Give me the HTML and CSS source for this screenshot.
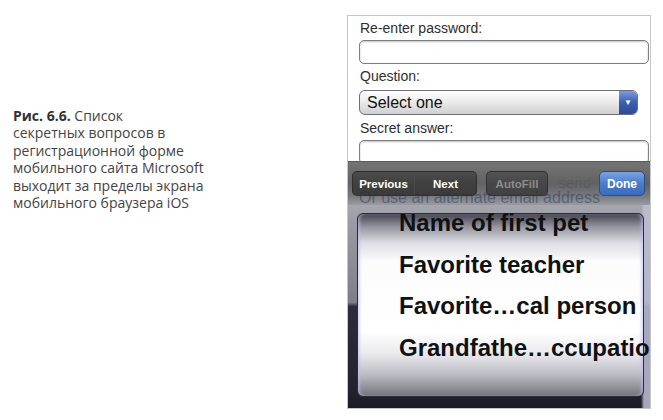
FILE: index.html
```html
<!DOCTYPE html>
<html lang="ru">
<head>
  <meta charset="UTF-8" />
  <title>Рис. 6.6</title>
  <link rel="stylesheet" href="styles.css">
</head>
<body>
  <div class="page">
    <p class="caption">
      <b>Рис. 6.6.</b> Список<br>
      секретных вопросов в<br>
      регистрационной форме<br>
      мобильного сайта Microsoft<br>
      выходит за пределы экрана<br>
      мобильного браузера iOS
    </p>

    <div class="phone">
      <div class="form">
        <label class="field-label">Re-enter password:</label>
        <div class="text-input"></div>
        <label class="field-label gap-q">Question:</label>
        <div class="select">
          <span>Select one</span>
          <span class="select-arrow">&#9660;</span>
        </div>
        <label class="field-label gap-s">Secret answer:</label>
        <div class="text-input"></div>
        <div class="hint">send</div>
        <a class="alt-link">Or use an alternate email address</a>
      </div>

      <!-- панель клавиатуры поверх формы -->
      <div class="toolbar">
        <div class="segmented">
          <span class="seg">Previous</span>
          <span class="seg">Next</span>
        </div>
        <span class="tbtn disabled">AutoFill</span>
        <span class="tbtn done">Done</span>
      </div>

      <div class="picker">
        <div class="wheel">
          <ul class="options">
            <li>Name of first pet</li>
            <li>Favorite teacher</li>
            <li>Favorite…cal person</li>
            <li>Grandfathe…ccupation</li>
          </ul>
        </div>
      </div>
    </div>
  </div>
</body>
</html>
```

FILE: styles.css
```css
body {
  margin: 0;
  background-color: #fff;
}
.page {
  display: flex;
  align-items: flex-start;
  padding-top: 15px;
}
.caption {
  flex: 0 0 347px;
  box-sizing: border-box;
  margin: 92px 0 0 0;
  padding-left: 13px;
  font-family: "Open Sans", sans-serif;
  font-size: 14px;
  line-height: 17.4px;
  color: #444;
}
.caption b {
  color: #333;
}

/* экран телефона */
.phone {
  position: relative;
  width: 302px;
  height: 392px;
  border: 1px solid #c6c6c6;
  overflow: hidden;
  background-color: #fff;
  font-family: "Liberation Sans", Arial, sans-serif;
}
.form {
  display: flex;
  flex-direction: column;
  padding: 3px 1px 0 11px;
}
.field-label {
  display: block;
  padding-left: 1px;
  font-size: 14px;
  line-height: 18px;
  color: #2e2e2e;
}
.gap-q {
  margin-top: 3px;
}
.gap-s {
  margin-top: 4px;
}
.text-input {
  height: 22px;
  margin-top: 3px;
  border: 1px solid #7e7e7e;
  border-radius: 5px;
  box-shadow: inset 0 1px 2px rgba(0,0,0,0.25);
  background-color: #fff;
}
.select {
  display: flex;
  align-items: center;
  justify-content: space-between;
  width: 277px;
  height: 23px;
  margin-top: 5px;
  border: 1px solid #6f6f78;
  border-radius: 6px;
  overflow: hidden;
  background: linear-gradient(#ffffff, #ececec 45%, #d0d0d0);
  font-size: 16px;
  color: #111;
}
.select span:first-child {
  padding-left: 7px;
}
.select-arrow {
  display: flex;
  align-items: center;
  justify-content: center;
  width: 18px;
  height: 100%;
  background: linear-gradient(#7d9be0, #3a5fb2 50%, #2b4a96);
  color: #fff;
  font-size: 8px;
}
.hint {
  align-self: flex-end;
  margin: 10px 58px 0 0;
  font-size: 15px;
  color: #8a8a8a;
}
.alt-link {
  margin-top: -2px;
  font-size: 16px;
  line-height: 18px;
  color: #2a3f7a;
}

/* тулбар Previous / Next / Done */
.toolbar {
  position: absolute;
  left: 0;
  right: 0;
  top: 145px;
  height: 44px;
  display: flex;
  align-items: flex-start;
  padding: 9px 5px 0 4px;
  box-sizing: border-box;
  background: linear-gradient(rgba(112,112,112,0.97), rgba(86,86,88,0.93) 50%, rgba(88,90,98,0.82) 78%, rgba(120,122,130,0.75));
  border-top: 1px solid #5a5a5a;
  font-size: 11.5px;
  font-weight: bold;
  color: #fff;
}
.segmented {
  display: flex;
  width: 125px;
  height: 25px;
  border: 1px solid rgba(40,40,40,0.7);
  border-radius: 5px;
  box-sizing: border-box;
  background: linear-gradient(rgba(70,70,70,0.85), rgba(40,40,40,0.75));
  overflow: hidden;
}
.seg {
  flex: 1;
  display: flex;
  align-items: center;
  justify-content: center;
}
.seg + .seg {
  border-left: 1px solid rgba(80,80,80,0.6);
}
.tbtn {
  display: flex;
  align-items: center;
  justify-content: center;
  height: 25px;
  box-sizing: border-box;
  border-radius: 5px;
}
.disabled {
  width: 62px;
  margin-left: 9px;
  border: 1px solid rgba(40,40,40,0.7);
  background: linear-gradient(rgba(78,78,78,0.85), rgba(52,52,52,0.8));
  color: #8c8c8c;
}
.done {
  width: 46px;
  margin-left: auto;
  border: 1px solid #2d4d86;
  background: linear-gradient(#7aa3de, #4a7dcb 50%, #3a6cbd);
  font-size: 12px;
}

/* колесо выбора */
.picker {
  position: absolute;
  left: 0;
  right: 0;
  top: 189px;
  height: 203px;
  padding: 8px 6px 11px 9px;
  box-sizing: border-box;
  background:
    linear-gradient(to right, transparent 97%, rgba(190,190,215,0.85) 98%),
    linear-gradient(#a6a6ae, #9a9aa3 10%, #7e7e88 48%, #2c2c3c 50%, #22222f 92%, #1b1b26);
}
.wheel {
  height: 100%;
  box-sizing: border-box;
  border: 1px solid #2b2b33;
  border-radius: 6px;
  background: linear-gradient(#44444e 0%, #9494a0 7%, #dedee4 16%, #fcfcfd 26%, #ffffff 64%, #ececf0 76%, #bdbdc5 88%, #74747e 100%);
  box-shadow: inset 3px 0 3px -1px rgba(190,190,240,0.6), inset -3px 0 3px -1px rgba(190,190,240,0.6);
}
.options {
  list-style: none;
  margin: -12px 0 0 0;
  padding: 0 0 0 41px;
  white-space: nowrap;
  font-size: 24px;
  font-weight: bold;
  line-height: 41.7px;
  color: #111;
}
```
